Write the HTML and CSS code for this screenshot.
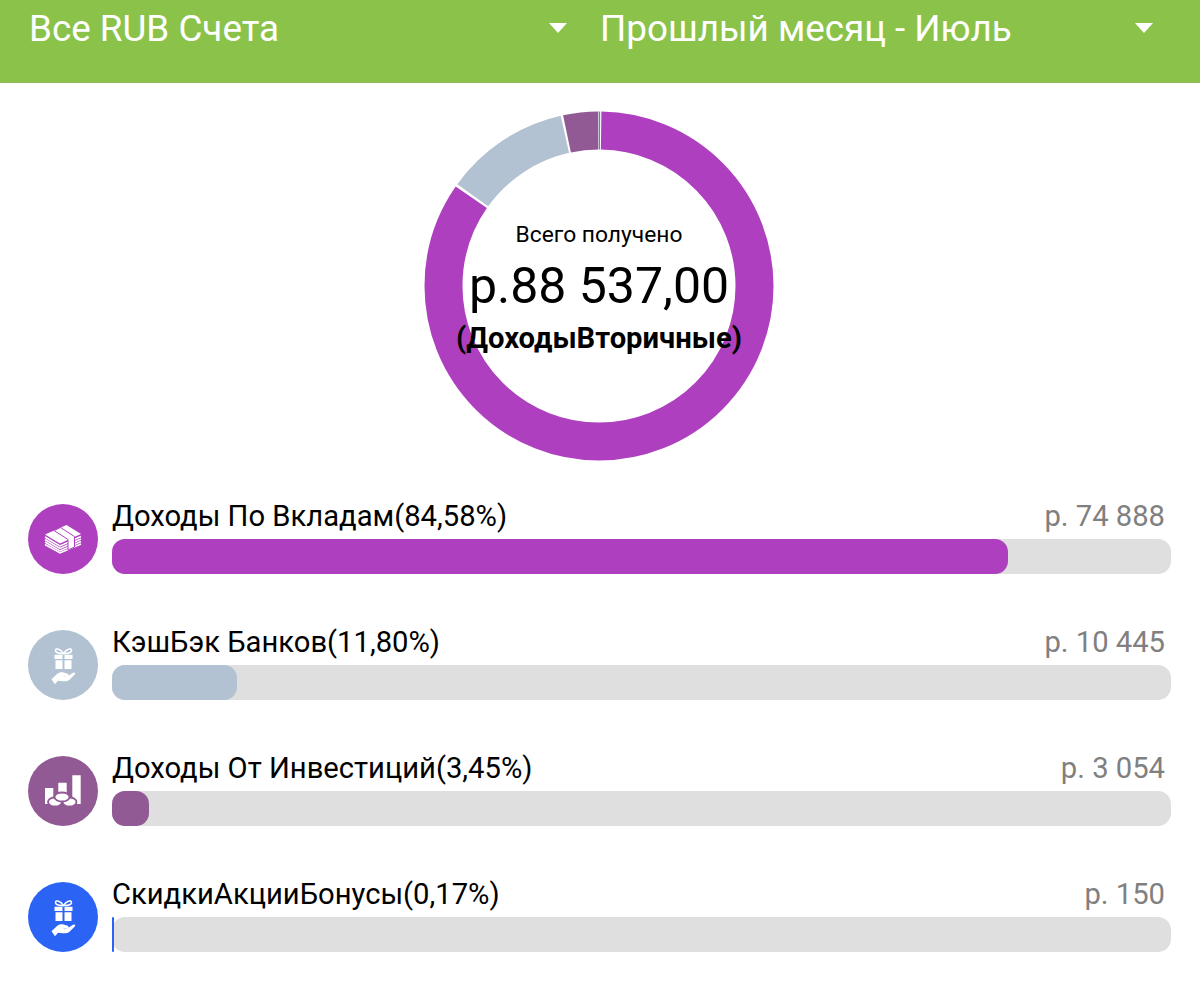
FILE: index.html
```html
<!DOCTYPE html>
<html lang="ru">
<head>
    <meta charset="UTF-8">
    <meta name="viewport" content="width=device-width, initial-scale=1.0">
    <title>Доходы</title>
    <link rel="stylesheet" href="styles.css">
</head>
<body>
    <div class="filter-bar">
        <div class="filter">
            <span>Все RUB Счета</span>
            <span class="caret"></span>
        </div>
        <div class="filter">
            <span>Прошлый месяц - Июль</span>
            <span class="caret"></span>
        </div>
    </div>

    <div class="chart">
        <svg class="donut" viewBox="0 0 350 350" width="350" height="350">
            <g fill="none" stroke-width="38" transform="rotate(-90 175 175)">
                <circle cx="175" cy="175" r="155.500" pathLength="360" stroke="#ae40bf" stroke-dasharray="304 56" stroke-dashoffset="-0.8"/>
                <circle cx="175" cy="175" r="155.500" pathLength="360" stroke="#b2c2d2" stroke-dasharray="41.6 318.4" stroke-dashoffset="-305.7"/>
                <circle cx="175" cy="175" r="155.500" pathLength="360" stroke="#915a94" stroke-dasharray="11.6 348.4" stroke-dashoffset="-348.1"/>
                <circle cx="175" cy="175" r="155.500" pathLength="360" stroke="#6d7fb5" stroke-dasharray="0.5 359.5" stroke-dashoffset="-359.9"/>
            </g>
        </svg>
        <div class="chart-text">
            <div class="chart-caption">Всего получено</div>
            <div class="chart-total">р.88 537,00</div>
            <div class="chart-type">(ДоходыВторичные)</div>
        </div>
    </div>

    <div class="rows">
        <div class="row">
            <div class="icon purple">
                <svg viewBox="0 0 70 70" width="70" height="70">
                    <path d="M17 30.500 38.500 21 53 30 32 39.500Z" fill="#fff"/>
                    <g fill="none" stroke="#fff" stroke-width="1.500">
                        <path d="M17 33 32 42 53 32.500"/>
                        <path d="M17 35.500 32 44.500 53 35"/>
                        <path d="M17 38 32 47 53 37.500"/>
                        <path d="M17 40.500 32 49 53 40"/>
                    </g>
                    <path d="M26 26.500 32.500 23.500 46.500 32.500V43L40 46V35.500Z" fill="#fff" stroke="#ae40bf" stroke-width="1"/>
                </svg>
            </div>
            <div class="row-body">
                <div class="row-head">
                    <span class="row-name">Доходы По Вкладам(84,58%)</span>
                    <span class="row-sum">р. 74 888</span>
                </div>
                <div class="track"><div class="fill purple" style="width: 84.58%"></div></div>
            </div>
        </div>

        <div class="row">
            <div class="icon slate">
                <svg viewBox="0 0 70 70" width="70" height="70">
                    <use href="#gift-hand"/>
                </svg>
            </div>
            <div class="row-body">
                <div class="row-head">
                    <span class="row-name">КэшБэк Банков(11,80%)</span>
                    <span class="row-sum">р. 10 445</span>
                </div>
                <div class="track"><div class="fill slate" style="width: 11.8%"></div></div>
            </div>
        </div>

        <div class="row">
            <div class="icon plum">
                <svg viewBox="0 0 70 70" width="70" height="70">
                    <path d="M17 32H25.300V48H17ZM30.300 26.700H38.700V48H30.300ZM44.300 19.300H52.700V48H44.300Z" fill="#fff"/>
                    <g fill="#fff" stroke="#915a94" stroke-width="1.800">
                        <ellipse cx="27" cy="46" rx="7" ry="4.500"/>
                        <ellipse cx="41.500" cy="46" rx="7" ry="4.500"/>
                        <ellipse cx="34" cy="41" rx="7.500" ry="4.500"/>
                    </g>
                </svg>
            </div>
            <div class="row-body">
                <div class="row-head">
                    <span class="row-name">Доходы От Инвестиций(3,45%)</span>
                    <span class="row-sum">р. 3 054</span>
                </div>
                <div class="track"><div class="fill plum" style="width: 3.45%"></div></div>
            </div>
        </div>

        <div class="row">
            <div class="icon blue">
                <svg viewBox="0 0 70 70" width="70" height="70">
                    <defs>
                        <g id="gift-hand">
                            <path d="M35.500 23.500C33 19 27.500 17.500 27.500 20.500 27.500 23 32 23.800 35.500 23.500 39 23.800 43.500 23 43.500 20.500 43.500 17.500 38 19 35.500 23.500Z" fill="none" stroke="#fff" stroke-width="1.500"/>
                            <path d="M26.500 24.800H34.500V29H26.500ZM36.500 24.800H44.500V29H36.500ZM27.500 30.300H34.500V39H27.500ZM36.500 30.300H43.500V39H36.500Z" fill="#fff"/>
                            <path d="M23.500 49.300 29 44C31 42.300 33 42 35.500 42.500L39 43.500C41 44 41 46.300 39 46.300H35C37 46.800 39.500 46.500 41 45.300L45 42.800C47 41.800 48 43.300 46.500 44.800L41.500 49.800C39.500 51.300 37.500 51.500 34.500 51.200L30 50.800 27 54.300Z" fill="#fff"/>
                        </g>
                    </defs>
                    <use href="#gift-hand"/>
                </svg>
            </div>
            <div class="row-body">
                <div class="row-head">
                    <span class="row-name">СкидкиАкцииБонусы(0,17%)</span>
                    <span class="row-sum">р. 150</span>
                </div>
                <div class="track"><div class="fill blue" style="width: 0.17%"></div></div>
            </div>
        </div>
    </div>
</body>
</html>
```

FILE: styles.css
```css
* {
    margin: 0;
    padding: 0;
    box-sizing: border-box;
    font-family: Roboto, "Noto Sans", sans-serif;
}

html, body {
    height: 983px;
    overflow: hidden;
}

body {
    background: #fff;
    color: #000;
}

.filter-bar {
    height: 83px;
    background: #8bc34a;
    border-bottom: 1px solid #8fb85c;
    padding: 7px 47px 0 29px;
    display: grid;
    grid-template-columns: 538px 553px;
    column-gap: 33px;
    color: #fff;
    font-size: 36.8px;
    line-height: 44px;
}

.filter {
    display: flex;
    justify-content: space-between;
    align-items: center;
    height: 44px;
}

.caret {
    border-left: 9px solid transparent;
    border-right: 9px solid transparent;
    border-top: 10px solid #fff;
    margin-top: -3px;
}

.chart {
    position: relative;
    width: 350px;
    height: 350px;
    margin: 28px 0 0 424px;
}

.donut {
    display: block;
}

.chart-text {
    position: absolute;
    top: 110px;
    left: 0;
    right: 0;
    text-align: center;
}

.chart-caption {
    font-size: 22.8px;
    line-height: 28px;
}

.chart-total {
    font-size: 50px;
    line-height: 74px;
}

.chart-type {
    font-size: 29.2px;
    line-height: 30px;
    font-weight: 700;
}

.rows {
    margin-top: 43px;
    padding: 0 29px 0 28px;
    display: flex;
    flex-direction: column;
    gap: 56px;
}

.row {
    display: flex;
    align-items: stretch;
    gap: 14px;
    height: 70px;
}

.icon {
    width: 70px;
    height: 70px;
    border-radius: 50%;
    flex: none;
}

.icon svg {
    display: block;
}

.row-body {
    flex: 1;
    display: flex;
    flex-direction: column;
    justify-content: space-between;
}

.row-head {
    display: flex;
    justify-content: space-between;
    height: 35px;
    font-size: 29.2px;
    line-height: 24px;
}

.row-sum {
    color: #808080;
    padding-right: 6px;
}

.track {
    height: 35px;
    background: #dfdfdf;
    border-radius: 13px;
}

.fill {
    height: 100%;
    border-radius: 13px;
}

.purple {
    background: #ae40bf;
}

.slate {
    background: #b2c2d2;
}

.plum {
    background: #915a94;
}

.blue {
    background: #2b63f5;
}
```
